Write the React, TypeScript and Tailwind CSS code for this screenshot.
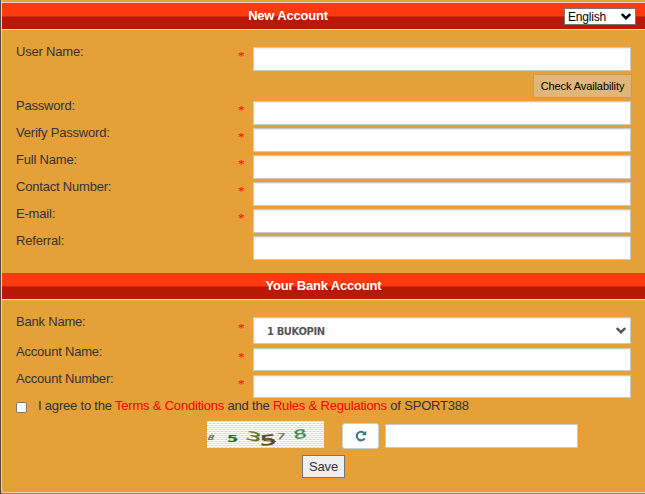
type FieldProps = { label: string; required?: boolean; rowClass?: string; inputClass?: string; labelClass?: string };

function Field({ label, required = true, rowClass = "h-[27px]", inputClass = "h-6", labelClass = "-mt-[3px]" }: FieldProps) {
  return (
    <div className={`flex items-start ${rowClass}`}>
      <label className={`w-[222px] leading-[16px] ${labelClass}`}>{label}</label>
      <Star show={required} />
      <input className={`w-[378px] border border-[#c8c8c8] bg-white px-3 shadow-[inset_0_1px_0_#eee] outline-none ${inputClass}`} />
    </div>
  );
}

function Star({ show = true, className = "pt-[1px]" }: { show?: boolean; className?: string }) {
  return (
    <span className={`w-[15px] font-['Liberation_Serif',serif] text-[13px] leading-[16px] text-[#ff0000] ${className}`}>
      {show ? "*" : ""}
    </span>
  );
}

function Header({ title, className = "" }: { title: string; className?: string }) {
  return (
    <h2 className={`h-[27px] border-b border-[#f1dcd0] bg-[linear-gradient(#fc3a10_0_13px,#da2608_13px_14px,#b91805_14px)] text-center text-[13px] leading-[25px] font-bold text-white ${className}`}>
      {title}
    </h2>
  );
}

function Chevron({ className }: { className: string }) {
  return (
    <svg viewBox="0 0 10 7" className={className} fill="none" stroke="currentColor" strokeWidth="2.4">
      <path d="M.8 1 5 5.2 9.2 1" />
    </svg>
  );
}

function Refresh() {
  return (
    <svg width="12" height="12" viewBox="0 0 12 12" fill="none">
      <path d="M9.4 3.3A4.3 4.3 0 1 0 9.7 8.4" stroke="currentColor" strokeWidth="2.1" />
      <path d="M11.3.8V5.3H6.7Z" fill="currentColor" />
    </svg>
  );
}

function Captcha() {
  return (
    <svg width="117" height="27" viewBox="0 0 117 27" className="mt-[-3px] bg-white">
      <defs>
        <pattern id="weave" width="4" height="4" patternUnits="userSpaceOnUse">
          <path d="M0 .5H2M2 2.5H4" stroke="#cfcbf0" />
          <path d="M2 .5H4M0 2.5H2" stroke="#ebe9fa" />
        </pattern>
      </defs>
      <rect width="117" height="27" fill="url(#weave)" />
      <g fontFamily="DejaVu Sans, sans-serif" letterSpacing="0">
        <text transform="translate(0 19) skewX(-20) scale(1.4 1)" fontSize="7" fill="#555555" stroke="#555555" strokeWidth=".2">8</text>
        <text transform="translate(20 20.5) scale(1.7 1)" fontSize="9.5" fontWeight="bold" fill="#196b2c">5</text>
        <text transform="translate(38 18) rotate(12) scale(2.1 1)" fontSize="12" fill="#65702c" stroke="#65702c" strokeWidth=".3">3</text>
        <text transform="translate(53 24.5) rotate(-3) scale(1.9 1)" fontSize="14" fill="#5c4a1c" stroke="#5c4a1c" strokeWidth=".5">5</text>
        <path d="M57 19.5 69 20.5" stroke="#5c4a1c" strokeWidth="1" />
        <text transform="translate(69 18) rotate(8) scale(1.6 1)" fontSize="9" fill="#6a5a62">7</text>
        <text transform="translate(87 18.5) rotate(-10) scale(1.8 1)" fontSize="12" fill="#37885b" stroke="#37885b" strokeWidth=".2">8</text>
      </g>
    </svg>
  );
}

export default function App() {
  return (
    <main className="flex h-[494px] w-[645px] flex-col overflow-hidden border-l border-[#55463f] bg-[#e5a038] font-['Liberation_Sans',Arial,sans-serif] text-[13px] tracking-[-0.2px] text-[#333333]">
      <section className="flex h-[493px] flex-col rounded-bl-[4px] border-b border-l border-[#e3d5c0]">
        <div className="relative mt-[2px] border-t border-[#e3d5c0]">
          <Header title="New Account" className="pr-[71px]" />
          <button className="absolute top-[5px] right-[9px] flex h-[17px] w-[72px] items-center justify-between border-[1.5px] border-[#767676] bg-white pr-[4px] pl-[3px] text-[12px] leading-none tracking-[-0.2px] text-black">
            English
            <Chevron className="h-[7px] w-[10px]" />
          </button>
        </div>
        <form className="h-[243px] pt-[17px] pl-[14px]">
          <Field label="User Name:" />
          <div className="flex h-[27px] w-[616px] justify-end">
            <button type="button" className="h-6 w-[99px] border border-[#c79a5c] bg-[#e0b679] text-[11px] leading-[20px] tracking-[-0.1px] text-black">
              Check Availability
            </button>
          </div>
          <Field label="Password:" />
          <Field label="Verify Password:" />
          <Field label="Full Name:" />
          <Field label="Contact Number:" />
          <Field label="E-mail:" />
          <Field label="Referral:" required={false} />
        </form>
        <Header title="Your Bank Account" />
        <form className="pt-[17px] pl-[14px]">
          <div className="flex h-[31px] items-start">
            <label className="-mt-[3px] w-[222px] leading-[16px]">Bank Name:</label>
            <Star className="pt-[3px]" />
            <div className="flex h-[27px] w-[378px] items-center justify-between border border-[#c8c8c8] bg-white pr-[4px] pl-[13px] text-[#555555] shadow-[inset_0_1px_0_#eee]">
              <span className="pt-[2px] font-['DejaVu_Sans',sans-serif] text-[10px] font-bold tracking-[-0.4px]">1 BUKOPIN</span>
              <Chevron className="h-[7px] w-[10px]" />
            </div>
          </div>
          <Field label="Account Name:" inputClass="h-[23px]" labelClass="-mt-[4px]" />
          <Field label="Account Number:" inputClass="h-[23px]" labelClass="-mt-[4px]" />
          <div className="flex h-[22px] items-start">
            <input type="checkbox" className="mt-0 h-[11px] w-[11px] appearance-none rounded-[2px] border border-[#767676] bg-white" />
            <p className="-mt-[4px] ml-[11px] leading-[16px] whitespace-nowrap">
              I agree to the <a className="text-[#ff0000]">Terms &amp; Conditions</a> and the{" "}
              <a className="text-[#ff0000]">Rules &amp; Regulations</a> of SPORT388
            </p>
          </div>
          <div className="flex h-[31px] items-start pl-[191px]">
            <Captcha />
            <button type="button" className="mt-[-1px] ml-[18px] flex h-[26px] w-[37px] items-center justify-center rounded-[3px] border border-[#cccccc] bg-white text-[#427985]">
              <Refresh />
            </button>
            <input className="ml-[6px] h-6 w-[193px] border border-[#c8c8c8] bg-white outline-none" />
          </div>
          <button type="button" className="ml-[286px] block h-[23px] w-[43px] border border-[#767676] bg-[#efefef] leading-[19px] tracking-[-0.1px]">
            Save
          </button>
        </form>
      </section>
      <div className="h-px bg-[#c57443]" />
    </main>
  );
}
